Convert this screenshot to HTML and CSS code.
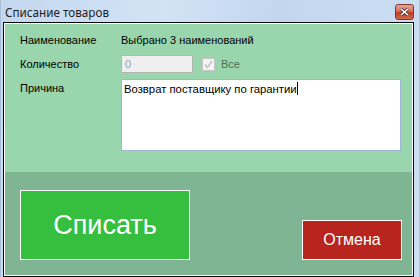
FILE: index.html
```html
<!DOCTYPE html>
<html lang="ru">
<head>
<meta charset="utf-8">
<title>Списание товаров</title>
<link rel="stylesheet" href="styles.css">
</head>
<body>
<div class="window">
  <div class="titlebar">
    <span class="title">Списание товаров</span>
    <span class="close">
      <svg width="9" height="8" viewBox="0 0 9 8"><path d="M1 1 L8 7 M8 1 L1 7" stroke="#3a3a3a" stroke-width="3.2"/><path d="M1 1 L8 7 M8 1 L1 7" stroke="#ffffff" stroke-width="1.6"/></svg>
    </span>
  </div>
  <div class="client">
    <div class="form">
      <div class="label">Наименование</div>
      <div class="value">Выбрано 3 наименований</div>
      <div class="label">Количество</div>
      <div class="qty-row">
        <div class="qty-input">0</div>
        <span class="check"><svg width="11" height="11" viewBox="0 0 11 11"><path d="M2 5.5 L4.5 8.5 L9 2" fill="none" stroke="#c4c4c4" stroke-width="1.6"/></svg></span>
        <span class="check-label">Все</span>
      </div>
      <div class="label label-top">Причина</div>
      <div class="memo">Возврат поставщику по гарантии<span class="caret"></span></div>
    </div>
    <div class="actions">
      <button class="btn btn-ok">Списать</button>
      <button class="btn btn-cancel">Отмена</button>
    </div>
  </div>
</div>
</body>
</html>
```
FILE: styles.css
```css
html, body {
  margin: 0;
  padding: 0;
}
body {
  width: 420px;
  height: 277px;
  overflow: hidden;
  font-family: "Liberation Sans", Arial, sans-serif;
}
.window {
  width: 420px;
  height: 277px;
  box-sizing: border-box;
  background: linear-gradient(100deg, #c3d7ee 0%, #d3e3f5 35%, #c2d6ee 60%, #cfe0f3 100%);
  border-left: 1px solid #a9bed8;
  border-right: 1px solid #a9bed8;
  display: flex;
  flex-direction: column;
}
.titlebar {
  height: 22px;
  display: flex;
  align-items: center;
  justify-content: space-between;
  padding: 0 5px 0 4px;
}
.title {
  font-family: "Noto Sans", "Open Sans", sans-serif;
  font-size: 11.7px;
  color: #1e1e1e;
  padding-top: 1px;
}
.close {
  width: 17px;
  height: 14px;
  margin-top: 2px;
  border: 1px solid #7a3a30;
  border-radius: 3px;
  background: linear-gradient(#e8a493 0%, #d8705c 45%, #c2391f 55%, #d26a4e 100%);
  display: flex;
  align-items: center;
  justify-content: center;
}
.client {
  margin: 0 5px 0 2px;
  border: 1px solid #0a0a0a;
  box-shadow: inset 0 0 0 1px #ffffff;
  padding: 1px;
  height: 251px;
  display: flex;
  flex-direction: column;
}
.form {
  background: #99d6ad;
  height: 148px;
  box-sizing: border-box;
  padding: 7px 10px 0 15px;
  display: grid;
  grid-template-columns: 101px 1fr;
  grid-auto-rows: auto;
  align-content: start;
  row-gap: 6px;
  align-items: center;
  font-size: 11px;
  color: #000000;
}
.label, .value {
  line-height: 18px;
  height: 18px;
  color: #000000;
}
.label-top {
  align-self: start;
}
.qty-row {
  display: flex;
  align-items: center;
  height: 18px;
}
.qty-input {
  width: 72px;
  height: 18px;
  box-sizing: border-box;
  border: 1px solid #b5b5b5;
  background: #efefef;
  color: #9aa3b4;
  padding-left: 3px;
  line-height: 16px;
}
.check {
  width: 11px;
  height: 11px;
  margin-left: 9px;
  border: 1px solid #c4c4c4;
  background: #f4f4f4;
  display: flex;
}
.check-label {
  margin-left: 6px;
  color: #4f7258;
}
.memo {
  width: 280px;
  height: 72px;
  box-sizing: border-box;
  background: #ffffff;
  border: 1px solid #9fb6d8;
  padding: 2px 2px;
  font-size: 11.3px;
  line-height: 14px;
  color: #000;
  align-self: start;
}
.caret {
  display: inline-block;
  width: 1px;
  height: 13px;
  background: #000;
  vertical-align: -2px;
}
.actions {
  flex: 1;
  background: #7fb592;
  display: flex;
  align-items: flex-end;
  justify-content: space-between;
  padding: 0 10px 15px 15px;
}
.btn {
  font-family: "Liberation Sans", Arial, sans-serif;
  color: #ffffff;
  border: 1px solid #ffffff;
  padding: 0;
  cursor: pointer;
}
.btn-ok {
  width: 170px;
  height: 70px;
  background: #36bf3e;
  font-size: 27px;
}
.btn-cancel {
  width: 100px;
  height: 40px;
  background: #b8251f;
  font-size: 16px;
}
```
